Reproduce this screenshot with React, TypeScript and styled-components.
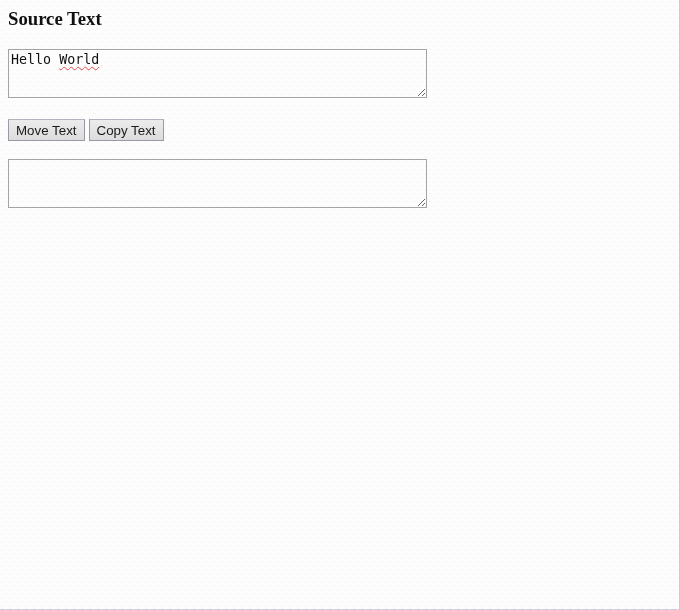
import React, { useState } from 'react';
import styled, { createGlobalStyle } from 'styled-components';

const GlobalStyle = createGlobalStyle`
  html {
    min-height: 100%;
    background-color: #fdfdfe;
    box-shadow: inset -1px -1px 0 #c9c9de;
  }
  body {
    margin: 8px;
    font-family: "Liberation Serif", "Times New Roman", serif;
    color: #000;
  }
  body::before,
  body::after {
    content: '';
    position: fixed;
    inset: 0;
    z-index: -1;
    pointer-events: none;
    background-image: linear-gradient(to right, #ffff4c 1px, transparent 1px);
    background-size: 8px 8px;
    -webkit-mask-image: linear-gradient(to bottom, #000 1px, transparent 1px);
    mask-image: linear-gradient(to bottom, #000 1px, transparent 1px);
    -webkit-mask-size: 8px 8px;
    mask-size: 8px 8px;
  }
  body::before {
    background-position: 5px 0;
    -webkit-mask-position: 0 1px;
    mask-position: 0 1px;
  }
  body::after {
    background-position: 1px 0;
    -webkit-mask-position: 0 5px;
    mask-position: 0 5px;
  }
`;

const Page = styled.div`
  display: flex;
  flex-direction: column;
  align-items: flex-start;
`;

const Heading = styled.h3`
  margin: 0 0 20px;
  font-family: "Liberation Serif", serif;
  font-size: 18.72px;
  font-weight: bold;
  line-height: 21px;
  color: #111;
`;

const Field = styled.div<{ $gapAfter: number }>`
  position: relative;
  margin-bottom: ${(p) => p.$gapAfter}px;
`;

const Area = styled.textarea`
  display: block;
  box-sizing: border-box;
  width: 419px;
  height: 49px;
  margin: 0;
  padding: 2px;
  border: 1px solid #a4a4a4;
  background: transparent;
  font-family: "DejaVu Sans Mono", monospace;
  font-size: 13.33px;
  line-height: 15px;
  color: #111;
  outline: none;
`;

const Squiggle = styled.div`
  position: absolute;
  left: 3px;
  top: 3px;
  pointer-events: none;
  white-space: pre;
  font-family: "DejaVu Sans Mono", monospace;
  font-size: 13.33px;
  line-height: 15px;
  color: transparent;
`;

const Misspelled = styled.span`
  text-decoration: underline wavy #e04a4a;
  text-decoration-thickness: 1px;
  text-underline-offset: 2px;
`;

const ButtonRow = styled.div`
  display: flex;
  gap: 4px;
  margin-bottom: 18px;
`;

const Button = styled.button`
  box-sizing: border-box;
  height: 22px;
  padding: 0 7px;
  border: 1px solid #9a9aa6;
  border-top-color: #b4b4be;
  border-radius: 0;
  background: linear-gradient(#ececec, #dcdcdc);
  font-family: "Liberation Sans", Arial, sans-serif;
  font-size: 13.33px;
  color: #1a1a1a;
  cursor: pointer;
`;

export default function App() {
  const [source, setSource] = useState('Hello World');
  const [target, setTarget] = useState('');

  const moveText = () => {
    setTarget(source);
    setSource('');
  };

  const copyText = () => {
    setTarget(source);
  };

  return (
    <>
      <GlobalStyle />
      <Page>
        <Heading>Source Text</Heading>
        <Field $gapAfter={21}>
          <Area value={source} spellCheck={false} onChange={(e) => setSource(e.target.value)} />
          {source === 'Hello World' && (
            <Squiggle>
              Hello <Misspelled>World</Misspelled>
            </Squiggle>
          )}
        </Field>
        <ButtonRow>
          <Button onClick={moveText}>Move Text</Button>
          <Button onClick={copyText}>Copy Text</Button>
        </ButtonRow>
        <Field $gapAfter={0}>
          <Area value={target} onChange={(e) => setTarget(e.target.value)} />
        </Field>
      </Page>
    </>
  );
}
